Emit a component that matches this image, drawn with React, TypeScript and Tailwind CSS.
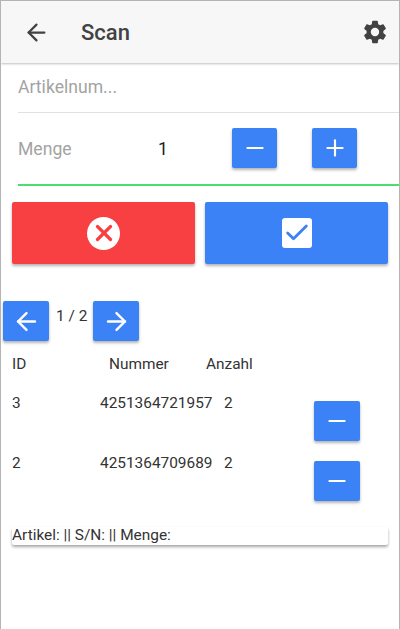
import { ArrowLeft, ArrowRight, Check, Minus, Plus, X } from 'lucide-react'
import type { ReactNode } from 'react'

function BlueButton({ children, className }: { children: ReactNode; className: string }) {
  return (
    <button className={`flex items-center justify-center rounded-[2px] bg-[#3b82f6] text-white shadow-[0_2px_3px_rgba(0,0,0,0.3)] ${className}`}>
      {children}
    </button>
  )
}

function Gear() {
  return (
    <svg width="28" height="28" viewBox="0 0 24 24" fill="#424242">
      <path d="M19.14 12.94c.04-.3.06-.61.06-.94 0-.32-.02-.64-.07-.94l2.03-1.58a.49.49 0 0 0 .12-.61l-1.92-3.32a.49.49 0 0 0-.59-.22l-2.39.96c-.5-.38-1.03-.7-1.62-.94l-.36-2.54a.48.48 0 0 0-.48-.41h-3.84c-.24 0-.43.17-.47.41l-.36 2.54c-.59.24-1.13.57-1.62.94l-2.39-.96c-.22-.08-.47 0-.59.22L2.74 8.87c-.12.21-.08.47.12.61l2.03 1.58c-.05.3-.09.63-.09.94s.02.64.07.94l-2.03 1.58a.49.49 0 0 0-.12.61l1.92 3.32c.12.22.37.29.59.22l2.39-.96c.5.38 1.03.7 1.62.94l.36 2.54c.05.24.24.41.48.41h3.84c.24 0 .44-.17.47-.41l.36-2.54c.59-.24 1.13-.56 1.62-.94l2.39.96c.22.08.47 0 .59-.22l1.92-3.32c.12-.22.07-.47-.12-.61l-2.01-1.58zM12 15.6A3.6 3.6 0 1 1 12 8.4a3.6 3.6 0 0 1 0 7.2z" />
    </svg>
  )
}

const rows = [
  { id: '3', nummer: '4251364721957', anzahl: '2' },
  { id: '2', nummer: '4251364709689', anzahl: '2' },
]

export default function App() {
  return (
    <div className="flex h-[629px] w-[400px] flex-col overflow-hidden border-x border-t border-[#b4b4b4] bg-white font-['Roboto',sans-serif] text-[15.4px] text-[#333]">
      <header className="flex h-[62px] shrink-0 items-center bg-[#f7f7f7] pr-[10px] pl-[22px] shadow-[0_1px_2px_rgba(0,0,0,0.25)]">
        <ArrowLeft size={27} strokeWidth={2} className="text-[#424242]" />
        <span className="ml-[31px] text-[22px] font-medium text-[#424242]">Scan</span>
        <div className="ml-auto">
          <Gear />
        </div>
      </header>

      <div className="ml-[17px] flex h-[50px] shrink-0 items-center border-b border-[#e0e0e0] text-[17.6px] text-[#a3a3a3]">
        Artikelnum...
      </div>

      <div className="ml-[17px] flex h-[73px] shrink-0 items-center border-b-2 border-[#4ade6f] pb-[2px] text-[17.6px]">
        <span className="w-[140px] pt-[4px] text-[#a3a3a3]">Menge</span>
        <span className="w-[74px] pt-[4px] text-[#222]">1</span>
        <BlueButton className="h-[40px] w-[45px]">
          <Minus size={26} strokeWidth={2} />
        </BlueButton>
        <BlueButton className="ml-[35px] h-[40px] w-[45px]">
          <Plus size={26} strokeWidth={2} />
        </BlueButton>
      </div>

      <div className="mt-[16px] flex shrink-0 gap-[10px] pl-[11px]">
        <button className="flex h-[62px] w-[183px] items-center justify-center rounded-[2px] bg-[#f83f41] shadow-[0_2px_3px_rgba(0,0,0,0.3)]">
          <span className="flex h-[33px] w-[33px] items-center justify-center rounded-full bg-white">
            <X size={26} strokeWidth={3} className="text-[#f83f41]" />
          </span>
        </button>
        <BlueButton className="h-[62px] w-[183px]">
          <span className="flex h-[30px] w-[30px] items-center justify-center rounded-[3px] bg-white">
            <Check size={28} strokeWidth={2.4} className="text-[#3b82f6]" />
          </span>
        </BlueButton>
      </div>

      <div className="mt-[37px] flex shrink-0 items-start pl-[2px]">
        <BlueButton className="h-[40px] w-[46px]">
          <ArrowLeft size={29} strokeWidth={2} />
        </BlueButton>
        <span className="mt-[6px] ml-[7px] w-[37px] leading-[19px]">1 / 2</span>
        <BlueButton className="h-[40px] w-[46px]">
          <ArrowRight size={29} strokeWidth={2} />
        </BlueButton>
      </div>

      <div className="mt-[14px] flex shrink-0 pl-[11px] leading-[19px]">
        <span className="w-[97px]">ID</span>
        <span className="w-[97px]">Nummer</span>
        <span>Anzahl</span>
      </div>

      <div className="mt-[20px] flex shrink-0 flex-col gap-[20px] pl-[11px]">
        {rows.map((row) => (
          <div key={row.id} className="flex h-[40px] items-start leading-[19px]">
            <span className="w-[88px]">{row.id}</span>
            <span className="w-[124px]">{row.nummer}</span>
            <span className="w-[90px]">{row.anzahl}</span>
            <BlueButton className="mt-[7px] h-[40px] w-[46px]">
              <Minus size={26} strokeWidth={2} />
            </BlueButton>
          </div>
        ))}
      </div>

      <div className="mt-[33px] ml-[11px] h-[18px] w-[376px] shrink-0 rounded-[2px] bg-white leading-[17px] shadow-[0_2px_3px_rgba(0,0,0,0.35)]">
        Artikel: || S/N: || Menge:
      </div>
    </div>
  )
}
